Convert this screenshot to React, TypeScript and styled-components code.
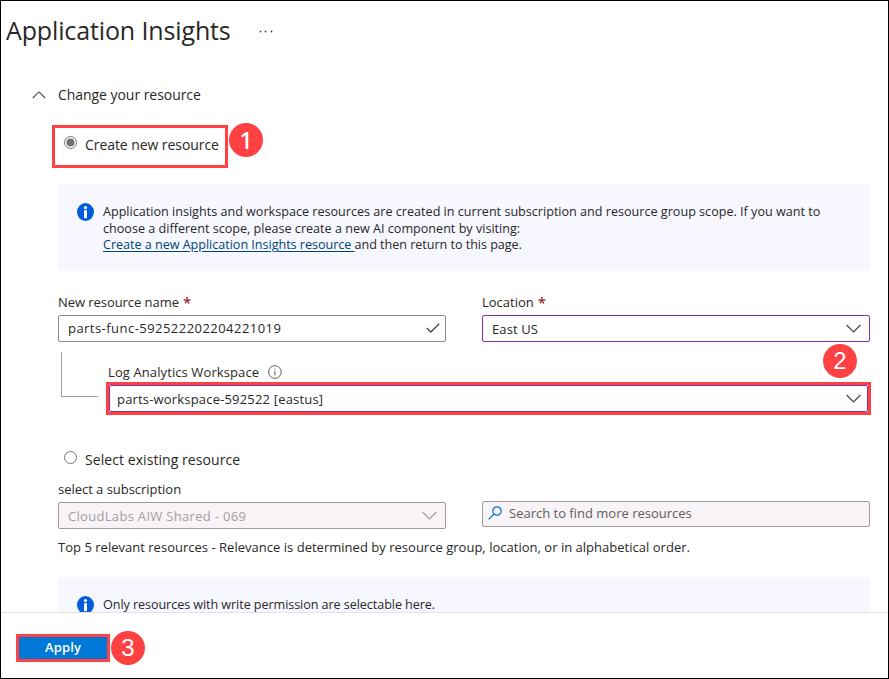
import React from "react";
import styled, { createGlobalStyle } from "styled-components";

const GlobalStyle = createGlobalStyle`
  *, *::before, *::after { box-sizing: border-box; }
  body { margin: 0; background: #fff; }
`;

const RED = "#ff4143";

const Frame = styled.div`
  width: 889px;
  height: 679px;
  border: 1px solid #000;
  background: #fff;
  color: #292827;
  font-family: "Open Sans", "Noto Sans", sans-serif;
  font-size: 13px;
  line-height: 18px;
  display: flex;
  flex-direction: column;
  overflow: hidden;
`;

const Text = styled.span<{ $track?: number }>`
  white-space: pre;
  letter-spacing: ${(p) => p.$track ?? 0}px;
`;

const Header = styled.header`
  display: flex;
  align-items: flex-start;
  gap: 29px;
  height: 84px;
  padding: 12px 0 0 5px;
`;

const Title = styled.h1`
  margin: 0;
  width: 224px;
  font-size: 25px;
  line-height: 34px;
  font-weight: 400;
  letter-spacing: -0.13px;
  white-space: nowrap;
`;

const MoreIcon = styled.svg`
  margin-top: 15px;
`;

const Scroll = styled.main`
  height: 527px;
  overflow: hidden;
  padding: 0 18px 0 57px;
`;

const SectionToggle = styled.div`
  display: flex;
  align-items: center;
  gap: 12px;
  height: 20px;
  margin-left: -26px;
  font-size: 14px;
  line-height: 20px;
`;

const Option = styled.label<{ $outlined?: boolean }>`
  position: relative;
  display: flex;
  align-items: flex-start;
  gap: 7px;
  width: ${(p) => (p.$outlined ? "176px" : "210px")};
  height: ${(p) => (p.$outlined ? "43px" : "30px")};
  margin: ${(p) => (p.$outlined ? "20px 0 16px -6px" : "35px 0 0 -6px")};
  padding: ${(p) => (p.$outlined ? "7px 0 0 9px" : "0 0 0 12px")};
  border: ${(p) => (p.$outlined ? `3px solid ${RED}` : "none")};
  font-size: 14px;
  line-height: 20px;
  white-space: nowrap;
`;

const RadioIcon = styled.svg`
  flex: none;
`;

const Badge = styled.span<{ $x: number; $y: number }>`
  position: absolute;
  left: ${(p) => p.$x}px;
  top: ${(p) => p.$y}px;
  width: 34px;
  height: 34px;
  border-radius: 50%;
  background: ${RED};
  color: #fff;
  font: 500 24px/33px "Noto Sans", sans-serif;
  text-align: center;
`;

const PlainBadge = styled(Badge)`
  font: 24px/34px "Liberation Sans", sans-serif;
`;

const Notice = styled.section<{ $height: number }>`
  display: flex;
  gap: 9px;
  height: ${(p) => p.$height}px;
  padding: 19px 0 0 19px;
  background: #f7f7ff;
  border-radius: 3px;
  font-size: 12.6px;
  line-height: 16.5px;
`;

const NoticeBody = styled.div`
  display: flex;
  flex-direction: column;
  padding-top: 1px;
`;

const Link = styled.a`
  color: #004578;
  text-decoration: underline;
  text-underline-offset: 2px;
  letter-spacing: -0.03px;
`;

const TwoColumns = styled.div`
  display: grid;
  grid-template-columns: 388px 388px;
  column-gap: 36px;
`;

const FormRow = styled(TwoColumns)`
  margin-top: 22px;
`;

const Field = styled.div`
  display: flex;
  flex-direction: column;
`;

const Label = styled.div`
  display: flex;
  align-items: center;
  height: 18px;
  margin-bottom: 4px;
`;

const Required = styled.span`
  color: #a4262c;
  font-weight: 600;
  font-size: 15px;
  margin-left: 4px;
`;

const tones = {
  normal: { line: "#8a8886", fill: "#fff", ink: "#292827" },
  changed: { line: "#8a2da5", fill: "#fff", ink: "#292827" },
  disabled: { line: "#a19b9b", fill: "#f7f3f7", ink: "#a19f9d" },
};

const Control = styled.div<{ $tone: keyof typeof tones }>`
  display: flex;
  align-items: center;
  justify-content: space-between;
  height: 27px;
  padding: 0 8px 0 9px;
  border: 1px solid ${(p) => tones[p.$tone].line};
  border-radius: 2px;
  background: ${(p) => tones[p.$tone].fill};
  color: ${(p) => tones[p.$tone].ink};
`;

const NameInput = styled(Control)`
  padding: 0 5px 1px 9px;
`;

const WorkspaceControl = styled(Control)`
  padding: 0 6px 0 7px;
`;

const SearchBox = styled(Control)`
  height: 26px;
  margin-top: -1px;
  padding: 0 0 2px 5px;
  justify-content: flex-start;
  gap: 7px;
  color: #605e5c;
`;

const Workspace = styled.div`
  position: relative;
  display: flex;
  gap: 8px;
  margin: 10px -1px 0 3px;
`;

const Elbow = styled.div`
  width: 37px;
  height: 45px;
  border: solid #a19f9d;
  border-width: 0 0 1px 1px;
`;

const WorkspaceField = styled.div`
  flex: 1;
  padding-top: 11px;
`;

const WorkspaceLabel = styled.div`
  display: flex;
  align-items: center;
  gap: 8px;
  height: 18px;
  padding-left: 2px;
`;

const Highlight = styled.div`
  height: 33px;
  margin-top: 1px;
  border: 3px solid ${RED};
`;

const Relevance = styled.p`
  margin: 9px 0 21px;
  height: 18px;
  white-space: nowrap;
`;

const Footer = styled.footer`
  flex: 1;
  border-top: 1px solid #eadfe2;
  padding: 21px 0 0 15px;
`;

const ApplyArea = styled.div`
  position: relative;
  width: 94px;
`;

const ApplyButton = styled.button`
  display: block;
  width: 94px;
  height: 28px;
  padding: 0 0 2px;
  border: 3px solid ${RED};
  background: #0078d7;
  color: #fff;
  font: 600 13px/20px "Open Sans", sans-serif;
`;

const Radio = ({ checked }: { checked?: boolean }) => (
  <RadioIcon width="14" height="15" viewBox="0 0 14 15">
    <circle cx="6.5" cy="7.5" r="6" fill="#fff" stroke="#767676" />
    {checked && <circle cx="6.5" cy="7.5" r="4" fill="#707070" />}
  </RadioIcon>
);

const Chevron = ({ color = "#484644" }: { color?: string }) => (
  <svg width="15" height="9" viewBox="0 0 15 9" fill="none" stroke={color} strokeWidth="1.2">
    <path d="M.6 1 7.5 7.9 14.4 1" />
  </svg>
);

const InfoIcon = () => (
  <svg width="17" height="18" viewBox="0 0 17 18">
    <ellipse cx="8.5" cy="9" rx="8.5" ry="8.9" fill="#015cda" />
    <circle cx="8.5" cy="4.6" r="1.6" fill="#fff" />
    <path d="M7 7.2h3v8H7z" fill="#fff" />
  </svg>
);

const HintIcon = () => (
  <svg width="15" height="15" viewBox="0 0 15 15" fill="none" stroke="#605e5c">
    <circle cx="7.9" cy="7" r="6.3" />
    <path d="M7.9 6v4.5M7.9 3.7v1.2" />
  </svg>
);

export default function App() {
  return (
    <Frame>
      <GlobalStyle />
      <Header>
        <Title>Application Insights</Title>
        <MoreIcon width="14" height="6" viewBox="0 0 14 6" fill="#484644">
          <circle cx="1.5" cy="3.5" r=".9" />
          <circle cx="6.5" cy="3.5" r=".9" />
          <circle cx="12.5" cy="3.5" r=".9" />
        </MoreIcon>
      </Header>

      <Scroll>
        <SectionToggle>
          <svg width="14" height="8" viewBox="0 0 14 8" fill="none" stroke="#484644" strokeWidth="1.1">
            <path d="M.8 7 7 .9 13.2 7" />
          </svg>
          <Text $track={-0.05}>Change your resource</Text>
        </SectionToggle>

        <Option $outlined>
          <Radio checked />
          <Text $track={-0.07}>Create new resource</Text>
          <Badge $x={174} $y={-5}>1</Badge>
        </Option>

        <Notice $height={87}>
          <InfoIcon />
          <NoticeBody>
            <Text>Application insights and workspace resources are created in current subscription and resource group scope. If you want to</Text>
            <Text>choose a different scope, please create a new AI component by visiting:</Text>
            <Text $track={-0.04}>
              <Link>Create a new Application Insights resource </Link>
              and then return to this page.
            </Text>
          </NoticeBody>
        </Notice>

        <FormRow>
          <Field>
            <Label>
              <Text $track={-0.06}>New resource name</Text>
              <Required>*</Required>
            </Label>
            <NameInput $tone="normal">
              <Text $track={0.46}>parts-func-592522202204221019</Text>
              <svg width="14" height="10" viewBox="0 0 14 10" fill="none" stroke="#484644" strokeWidth="1.3">
                <path d="M.8 5 4.8 9 13.2.7" />
              </svg>
            </NameInput>
          </Field>
          <Field>
            <Label>
              <Text>Location</Text>
              <Required>*</Required>
            </Label>
            <Control $tone="changed">
              <Text $track={0.12}>East US</Text>
              <Chevron />
            </Control>
          </Field>
        </FormRow>

        <Workspace>
          <Elbow />
          <WorkspaceField>
            <WorkspaceLabel>
              <Text $track={0.1}>Log Analytics Workspace</Text>
              <HintIcon />
            </WorkspaceLabel>
            <Highlight>
              <WorkspaceControl $tone="changed">
                <Text $track={0.18}>parts-workspace-592522 [eastus]</Text>
                <Chevron />
              </WorkspaceControl>
            </Highlight>
          </WorkspaceField>
          <PlainBadge $x={762} $y={-8}>2</PlainBadge>
        </Workspace>

        <Option>
          <Radio />
          <Text $track={0.065}>Select existing resource</Text>
        </Option>

        <Label>
          <Text $track={-0.03}>select a subscription</Text>
        </Label>
        <TwoColumns>
          <Control $tone="disabled">
            <Text $track={0.31}>CloudLabs AIW Shared - 069</Text>
            <Chevron color="#a19f9d" />
          </Control>
          <SearchBox $tone="disabled">
            <svg width="14" height="14" viewBox="0 0 14 14" fill="none" stroke="#0078d4" strokeWidth="1.2">
              <circle cx="9" cy="5" r="4.2" />
              <path d="M6 8 .6 13.4" />
            </svg>
            <Text>Search to find more resources</Text>
          </SearchBox>
        </TwoColumns>

        <Relevance>
          <Text $track={0.018}>Top 5 relevant resources - Relevance is determined by resource group, location, or in alphabetical order.</Text>
        </Relevance>

        <Notice $height={56}>
          <InfoIcon />
          <NoticeBody>
            <Text $track={-0.07}>Only resources with write permission are selectable here.</Text>
          </NoticeBody>
        </Notice>
      </Scroll>

      <Footer>
        <ApplyArea>
          <ApplyButton>
            <Text $track={0.15}>Apply</Text>
          </ApplyButton>
          <PlainBadge $x={95} $y={-3}>3</PlainBadge>
        </ApplyArea>
      </Footer>
    </Frame>
  );
}
